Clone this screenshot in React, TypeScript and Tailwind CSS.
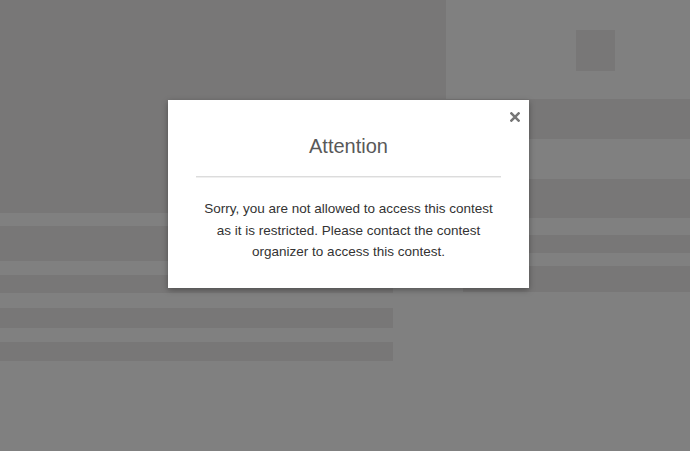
const dark = "bg-[#787777]";

export default function App() {
  return (
    <div className="relative h-[451px] w-[690px] overflow-hidden bg-[#808080] font-['Liberation_Sans',Arial,sans-serif]">
      {/* Page skeleton behind the overlay */}
      <div className="flex h-full">
        <div className="flex w-[446px] flex-col">
          <div className={`h-[213px] w-full ${dark}`} />
          <div className="h-[13px]" />
          <div className={`h-[35px] w-full ${dark}`} />
          <div className="h-[14px]" />
          <div className={`h-[18px] w-[393px] ${dark}`} />
          <div className="h-[15px]" />
          <div className={`h-[20px] w-[393px] ${dark}`} />
          <div className="h-[14px]" />
          <div className={`h-[19px] w-[393px] ${dark}`} />
        </div>
        <div className="flex flex-1 flex-col">
          <div className="flex h-[99px] pl-[130px] pt-[30px]">
            <div className={`h-[41px] w-[39px] ${dark}`} />
          </div>
          <div className={`h-[40px] w-full ${dark}`} />
          <div className="h-[40px]" />
          <div className={`h-[39px] w-full ${dark}`} />
          <div className="h-[17px]" />
          <div className={`h-[18px] w-full ${dark}`} />
          <div className="h-[13px]" />
          <div className="flex h-[26px]">
            <div className="w-[17px]" />
            <div className={`flex-1 ${dark}`} />
          </div>
        </div>
      </div>

      {/* Modal */}
      <div className="absolute left-[168px] top-[100px] h-[188px] w-[361px] bg-white shadow-[0_2px_6px_rgba(0,0,0,0.35)]">
        <button className="absolute right-[9px] top-[12px] text-[#777]" aria-label="close">
          <svg width="10" height="10" viewBox="0 0 10 10">
            <path d="M1.4 1.4 L8.6 8.6 M8.6 1.4 L1.4 8.6" stroke="currentColor" strokeWidth="2.5" strokeLinecap="square" />
          </svg>
        </button>
        <h2 className="pt-[35px] text-center text-[20px] leading-[22px] text-[#595959]">Attention</h2>
        <div className="mx-[28px] mt-[19px] h-[2px] border-t border-[#dcdcdc] bg-[#efefef]" />
        <p className="mt-[20px] px-[28px] text-center text-[13.5px] leading-[21.7px] text-[#333]">
          Sorry, you are not allowed to access this contest as it is restricted. Please contact the contest organizer to access this contest.
        </p>
      </div>
    </div>
  );
}
